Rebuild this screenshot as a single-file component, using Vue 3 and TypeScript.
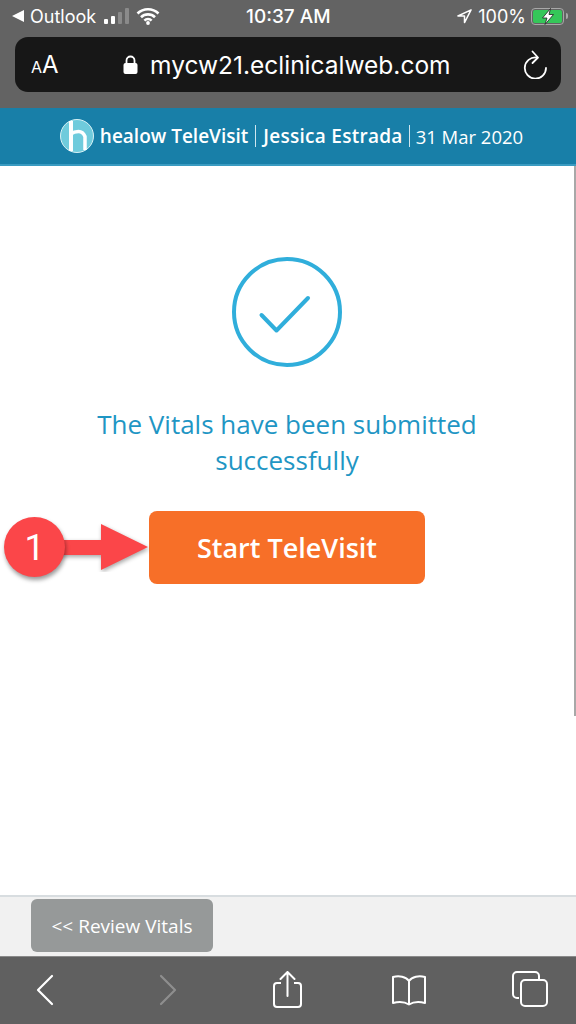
<script setup lang="ts">
const sitio = "mycw21.eclinicalweb.com";
const mensaje = "The Vitals have been submitted successfully";
</script>

<template>
    <div class="pantalla">
        <div class="barra-superior">
            <div class="estado">
                <div class="estado-izq">
                    <span class="triangulo"></span>
                    <span>Outlook</span>
                    <div class="senal">
                        <i class="b1"></i><i class="b2"></i><i class="b3"></i><i class="b4"></i>
                    </div>
                    <svg class="wifi" width="24" height="18" viewBox="0 0 24 18">
                        <path d="M1.5 6.5a15 15 0 0 1 21 0M5 10.2a10 10 0 0 1 14 0M8.4 13.6a5 5 0 0 1 7.2 0" fill="none" stroke="#fff" stroke-width="2.6" />
                        <circle cx="12" cy="16" r="1.9" fill="#fff" />
                    </svg>
                </div>
                <span class="hora">10:37 AM</span>
                <div class="estado-der">
                    <svg width="15" height="15" viewBox="0 0 16 16">
                        <path d="M15 1 1 7.5h7V14.5z" fill="none" stroke="#fff" stroke-width="1.6" stroke-linejoin="round" />
                    </svg>
                    <span>100%</span>
                    <div class="bateria">
                        <div class="carga">
                            <svg class="rayo" width="14" height="17" viewBox="0 0 14 17">
                                <path d="M9.500 0.500 1.500 10h4.500l-2 6.500 8.500-10H8z" fill="#fff" stroke="#1f1f1f" stroke-width="0.8" />
                            </svg>
                        </div>
                    </div>
                </div>
            </div>
            <div class="url">
                <span class="aa"><small>A</small>A</span>
                <div class="dominio">
                    <svg width="15" height="20" viewBox="0 0 15 20">
                        <path d="M3.500 9V5.500a4 4 0 0 1 8 0V9" fill="none" stroke="#fff" stroke-width="1.800" />
                        <rect x="0.500" y="8" width="14" height="11" rx="2" fill="#fff" />
                    </svg>
                    <span>{{ sitio }}</span>
                </div>
                <svg class="recargar" width="26" height="29" viewBox="0 0 26 29">
                    <path d="M15.500 7.500A10.600 10.600 0 1 0 25 18" fill="none" stroke="#fff" stroke-width="1.800" stroke-linecap="round" />
                    <path d="M11.500 1.500 17 7.500 11.500 13" fill="none" stroke="#fff" stroke-width="1.800" stroke-linecap="round" stroke-linejoin="round" />
                </svg>
            </div>
        </div>

        <header class="cabecera">
            <svg class="logo" width="34" height="34" viewBox="0 0 34 34">
                <circle cx="17" cy="17" r="16.500" fill="#6fcbdc" stroke="#d8f1f5" stroke-width="1" />
                <path d="M11 2v30" stroke="#fff" stroke-width="4" />
                <path d="M11 15q3-2.500 7.500-2.500t6.500 5V31" fill="none" stroke="#fff" stroke-width="3.500" />
            </svg>
            <span class="titulo">healow TeleVisit</span>
            <span class="sep"></span>
            <span class="titulo ancho">Jessica Estrada</span>
            <span class="sep corta"></span>
            <span class="fecha">31 Mar 2020</span>
        </header>

        <main class="contenido">
            <div class="scroll"></div>
            <svg class="check" width="110" height="110" viewBox="0 0 110 110">
                <circle cx="55" cy="55" r="53" fill="none" stroke="#30aedb" stroke-width="4" />
                <path d="M29.500 58 44.500 73.500 76 41" fill="none" stroke="#30aedb" stroke-width="4" stroke-linecap="round" stroke-linejoin="round" />
            </svg>
            <p class="mensaje">{{ mensaje }}</p>
            <div class="accion">
                <button type="button" class="iniciar">Start TeleVisit</button>
                <div class="nota">
                    <svg class="flecha" width="146" height="50" viewBox="0 0 146 50">
                        <path d="M50 18h47V2l47 23-47 23V33H50z" fill="#fb4649" filter="drop-shadow(1px 2px 2px rgba(0,0,0,.35))" />
                    </svg>
                    <span class="numero">1</span>
                </div>
            </div>
        </main>

        <footer class="pie">
            <button type="button" class="volver">&lt;&lt; Review Vitals</button>
        </footer>

        <nav class="barra-inferior">
            <svg class="baja-1" width="24" height="34" viewBox="0 0 24 34">
                <path d="M18 4 4 18 18 32" fill="none" stroke="#fff" stroke-width="2.200" stroke-linecap="round" stroke-linejoin="round" />
            </svg>
            <svg class="baja-1" width="24" height="34" viewBox="0 0 24 34">
                <path d="M6 4 20 18 6 32" fill="none" stroke="#8e8e8e" stroke-width="2.200" stroke-linecap="round" stroke-linejoin="round" />
            </svg>
            <svg width="34" height="38" viewBox="0 0 34 38">
                <path d="M10 12H6a3 3 0 0 0-3 3v18a3 3 0 0 0 3 3h21a3 3 0 0 0 3-3V15a3 3 0 0 0-3-3h-4" fill="none" stroke="#fff" stroke-width="2" stroke-linejoin="round" />
                <path d="M16.500 25V2M9.500 8l7-7 7 7" fill="none" stroke="#fff" stroke-width="2" stroke-linecap="round" stroke-linejoin="round" />
            </svg>
            <svg class="baja-2" width="36" height="34" viewBox="0 0 36 34">
                <path d="M18 8C15 3.500 8 2.500 2 4v26c6-1.500 12-1 16 1.500C22 29 28 28.500 34 30V4C28 2.500 21 3.500 18 8zM18 8v23" fill="none" stroke="#fff" stroke-width="2" stroke-linejoin="round" />
            </svg>
            <svg width="36" height="36" viewBox="0 0 36 36">
                <path d="M7 27H5a4 4 0 0 1-4-4V5a4 4 0 0 1 4-4h18a4 4 0 0 1 4 4v3" fill="none" stroke="#fff" stroke-width="2" />
                <rect x="9" y="9" width="26" height="26" rx="4" fill="none" stroke="#fff" stroke-width="2" />
            </svg>
        </nav>
    </div>
</template>

<style>
html,
body {
    margin: 0;
    background: #fff;
}
</style>

<style scoped>
.pantalla {
    width: 576px;
    height: 1024px;
    display: flex;
    flex-direction: column;
    overflow: hidden;
    font-family: "Open Sans", "Noto Sans", sans-serif;
}

.barra-superior {
    height: 108px;
    box-sizing: border-box;
    background: #636363;
    padding: 0 15px;
    flex: none;
}

.estado {
    height: 37px;
    display: flex;
    align-items: center;
    justify-content: space-between;
    color: #fff;
    font-family: Inter, "Liberation Sans", sans-serif;
    font-size: 18px;
    position: relative;
    padding-bottom: 5px;
    box-sizing: border-box;
    margin-right: -4px;
    margin-left: -3px;
}

.estado-izq,
.estado-der {
    display: flex;
    align-items: center;
    gap: 6px;
}

.triangulo {
    width: 0;
    height: 0;
    border-top: 6px solid transparent;
    border-bottom: 6px solid transparent;
    border-right: 12px solid #fff;
}

.senal {
    display: flex;
    align-items: flex-end;
    gap: 3px;
    height: 16px;
    margin-left: 2px;
}

.senal i {
    display: block;
    width: 4px;
    border-radius: 1px;
    background: #fff;
}

.senal .b1 {
    height: 5px;
}

.senal .b2 {
    height: 8px;
}

.senal .b3 {
    height: 12px;
    background: #8a8a8a;
}

.senal .b4 {
    height: 16px;
    background: #8a8a8a;
}

.wifi {
    margin-left: 1px;
}

.hora {
    position: absolute;
    left: 234px;
    font-size: 19px;
    font-weight: 500;
}

.bateria {
    width: 33px;
    height: 17px;
    border: 1px solid #a8a8a8;
    border-radius: 4px;
    padding: 1px;
    box-sizing: border-box;
    position: relative;
    margin-left: -1px;
    margin-right: 1px;
}

.bateria::after {
    content: "";
    position: absolute;
    right: -5px;
    top: 4px;
    width: 2px;
    height: 6px;
    background: #a8a8a8;
    border-radius: 0 2px 2px 0;
}

.carga {
    height: 100%;
    background: #35c759;
    border-radius: 2px;
    display: flex;
    align-items: center;
    justify-content: center;
}

.rayo {
    flex: none;
}

.url {
    height: 55px;
    background: #171717;
    border-radius: 13px;
    display: flex;
    align-items: center;
    justify-content: space-between;
    padding: 0 14px 0 16px;
    color: #fff;
}

.aa {
    font-family: Inter, "Liberation Sans", sans-serif;
    font-size: 24px;
    line-height: 1;
}

.aa small {
    font-size: 16px;
}

.dominio {
    display: flex;
    align-items: center;
    gap: 12px;
    font-family: Inter, "Liberation Sans", sans-serif;
    font-size: 24.5px;
    margin-left: -6px;
}

.cabecera {
    height: 58px;
    flex: none;
    box-sizing: border-box;
    background: #187fa8;
    border-bottom: 2px solid #3a9bc1;
    display: flex;
    align-items: center;
    justify-content: center;
    padding-left: 7px;
    color: #fff;
    font-size: 19px;
}

.logo {
    margin-right: 6px;
}

.titulo {
    font-weight: 600;
}

.ancho {
    letter-spacing: 0.27px;
}

.fecha {
    font-size: 18.5px;
    font-weight: 400;
}

.sep {
    width: 1px;
    height: 22px;
    background: #cfe6ef;
    margin: 0 7px;
}

.sep.corta {
    margin: 0 6px;
}

.contenido {
    flex: 1;
    background: #fff;
    display: flex;
    flex-direction: column;
    align-items: center;
    padding: 91px 2px 0 0;
    position: relative;
}

.scroll {
    position: absolute;
    right: 0;
    top: 0;
    width: 2px;
    height: 550px;
    background: #a8a8a8;
}

.check {
    display: block;
}

.mensaje {
    width: 420px;
    margin: 39px 0 0;
    text-align: center;
    color: #1f96c4;
    font-size: 26px;
    line-height: 36px;
}

.accion {
    margin-top: 33px;
    position: relative;
}

.iniciar {
    display: block;
    width: 276px;
    height: 73px;
    border: 0;
    border-radius: 8px;
    background: #f76f28;
    color: #fff;
    font-family: inherit;
    font-size: 27px;
    font-weight: 600;
}

.nota {
    position: absolute;
    left: -145px;
    top: 6px;
    width: 146px;
    height: 61px;
}

.flecha {
    position: absolute;
    left: 0;
    top: 5px;
}

.numero {
    position: absolute;
    left: 0;
    top: 0;
    width: 61px;
    height: 60px;
    border-radius: 50%;
    background: #fb4649;
    box-shadow: 1px 3px 4px rgba(0, 0, 0, 0.4);
    color: #fff;
    font-family: Roboto, sans-serif;
    font-size: 36px;
    line-height: 63px;
    text-align: center;
}

.pie {
    height: 61px;
    flex: none;
    box-sizing: border-box;
    background: #f1f1f1;
    border-top: 2px solid #d8dde0;
    padding: 2px 0 0 31px;
}

.volver {
    display: block;
    width: 182px;
    height: 53px;
    border: 0;
    border-radius: 6px;
    background: #969999;
    color: #fff;
    font-family: inherit;
    font-size: 19px;
    padding: 0;
}

.barra-inferior {
    height: 68px;
    flex: none;
    box-sizing: border-box;
    background: #606060;
    border-top: 1px solid #8a8a8a;
    display: grid;
    grid-template-columns: repeat(5, 121px);
    justify-content: center;
    justify-items: center;
    align-items: start;
    padding-top: 14px;
}

.baja-1 {
    margin-top: 1px;
}

.baja-2 {
    margin-top: 2px;
}
</style>
